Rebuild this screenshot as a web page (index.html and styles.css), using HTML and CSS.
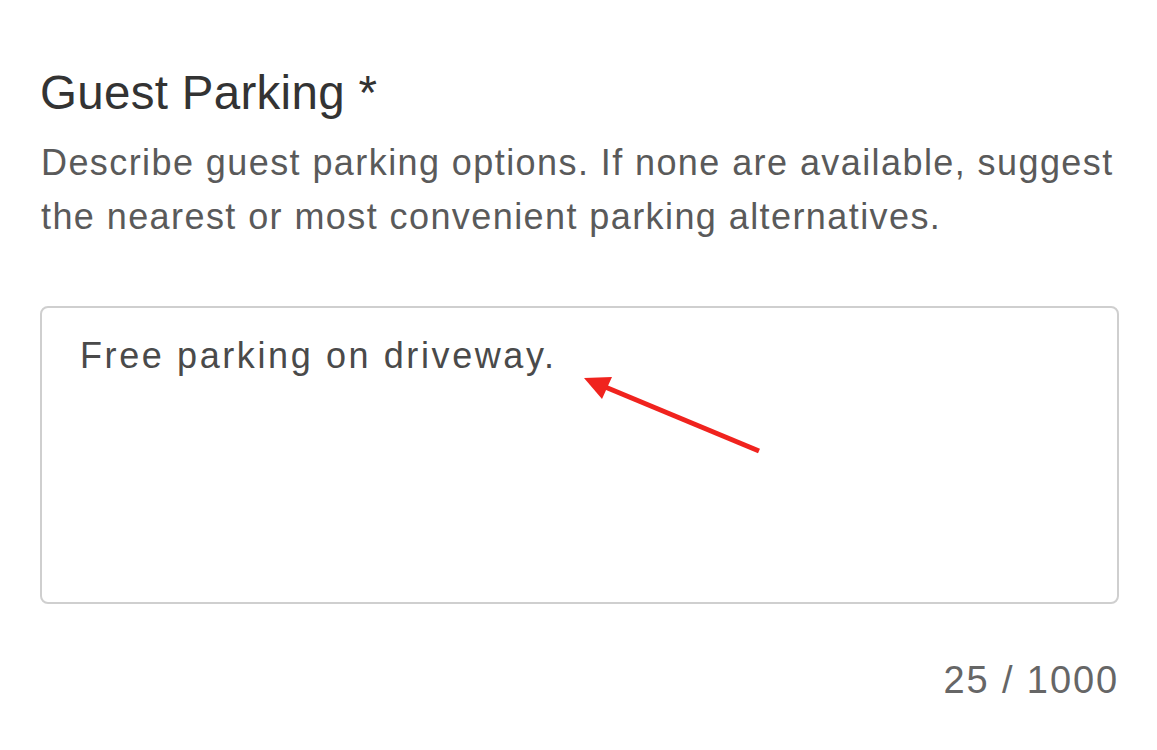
FILE: index.html
```html
<!DOCTYPE html>
<html>
<head>
<meta charset="utf-8">
<link rel="stylesheet" href="styles.css">
</head>
<body>
<div class="field">
  <h2 class="label">Guest Parking *</h2>
  <p class="help">Describe guest parking options. If none are available, suggest the nearest or most convenient parking alternatives.</p>
  <div class="box-wrap">
    <div class="box">Free parking on driveway.</div>
    <svg class="arrow" width="210" height="100" viewBox="0 0 210 100">
      <line x1="38" y1="14" x2="199" y2="81" stroke="#f0231e" stroke-width="5"/>
      <polygon points="24,8 52,7 42,29" fill="#f0231e"/>
    </svg>
  </div>
  <div class="counter">25 / 1000</div>
</div>
</body>
</html>
```
FILE: styles.css
```css
html, body {
  margin: 0;
  padding: 0;
  background: #fff;
}
body {
  font-family: "Liberation Sans", Arial, sans-serif;
  width: 1157px;
  height: 750px;
  overflow: hidden;
}
.field {
  padding: 66px 38px 0 40px;
}
.label {
  margin: 0;
  font-weight: normal;
  font-size: 47.5px;
  line-height: 54px;
  letter-spacing: 0.3px;
  color: #333;
}
.help {
  margin: 16px 0 0 1px;
  font-size: 36px;
  line-height: 54px;
  letter-spacing: 1.42px;
  color: #5a5a5a;
}
.box-wrap {
  position: relative;
  margin-top: 62px;
}
.box {
  box-sizing: border-box;
  height: 298px;
  border: 2px solid #cfcfcf;
  border-radius: 8px;
  padding: 24px 38px;
  font-size: 36px;
  line-height: 48px;
  letter-spacing: 2.6px;
  color: #4a4a4a;
}
.arrow {
  position: absolute;
  left: 520px;
  top: 64px;
}
.counter {
  margin-top: 56px;
  text-align: right;
  font-size: 38px;
  line-height: 40px;
  letter-spacing: 1.9px;
  color: #666;
}
```
